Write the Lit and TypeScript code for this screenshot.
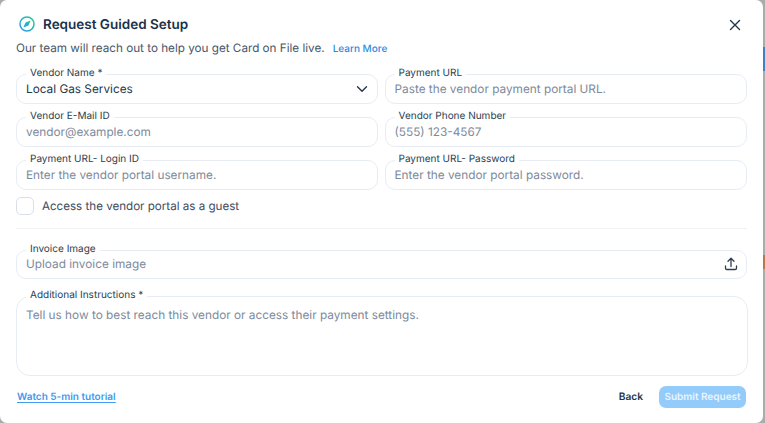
import { LitElement, html, css } from "lit";
import { customElement } from "lit/decorators.js";

@customElement("app-root")
export class AppRoot extends LitElement {
  static styles = css`
    :host {
      display: flex;
      width: 765px;
      height: 423px;
      overflow: hidden;
      background: #a9abad;
      font-family: Inter, "Liberation Sans", sans-serif;
      color: #1f3347;
      text-rendering: geometricPrecision;
    }
    .modal {
      box-sizing: border-box;
      width: 763px;
      height: 423px;
      flex: none;
      background: #fff;
      border-radius: 7px;
      padding: 14px 18px 0 16px;
      display: flex;
      flex-direction: column;
    }
    .strip {
      flex: 1;
      display: flex;
      flex-direction: column;
    }
    .s1 { height: 47px; }
    .s2 { height: 24px; background: #3d83c4; }
    .s3 { height: 184px; }
    .s4 { height: 14px; background: #b8794a; }
    .head {
      display: flex;
      align-items: center;
      height: 21px;
      padding-left: 2px;
    }
    .compass { width: 16px; height: 16px; flex: none; margin: -2px 0 0 1px; }
    .title {
      margin-left: 8px;
      font-size: 13.5px;
      font-weight: 600;
      color: #1c3146;
      flex: 1;
    }
    .close { width: 14px; height: 14px; flex: none; margin-right: 3px; }
    .sub {
      display: flex;
      align-items: baseline;
      margin-top: 6px;
      height: 17px;
      font-size: 11.7px;
      color: #465668;
    }
    .learn {
      margin-left: 8px;
      font-size: 10px;
      font-weight: 500;
      color: #2a8ce0;
    }
    .grid {
      margin-top: 16px;
      display: grid;
      grid-template-columns: 362px 362.5px;
      column-gap: 6.5px;
      row-gap: 13px;
    }
    .field {
      position: relative;
      box-sizing: border-box;
      height: 30px;
      border: 1px solid #e8ecf4;
      border-radius: 10px;
      display: flex;
      align-items: center;
      padding: 0 9px;
      font-size: 11.8px;
      color: #7d8a9b;
    }
    .legend {
      position: absolute;
      left: 9px;
      top: -8px;
      padding: 0 4px;
      background: #fff;
      font-size: 10px;
      line-height: 13px;
      color: #2c3e50;
      white-space: nowrap;
    }
    .value { flex: 1; }
    .filled { color: #23374b; }
    .chev { width: 14px; height: 14px; flex: none; margin-right: -1px; }
    .check {
      display: flex;
      align-items: center;
      margin-top: 7px;
      height: 18px;
      font-size: 11.6px;
      color: #3c4c5e;
    }
    .box {
      box-sizing: border-box;
      width: 18px;
      height: 18px;
      border: 1px solid #d9dfe9;
      border-radius: 5px;
      margin-right: 8px;
    }
    .rule {
      height: 1px;
      background: #f0f2f6;
      margin-top: 13px;
      width: 731px;
    }
    .wide { width: 731px; margin-top: 21px; height: 29px; padding-bottom: 1px; }
    .upload { width: 16px; height: 16px; flex: none; margin-right: -2px; }
    .area {
      width: 732px;
      height: 80px;
      margin-top: 17px;
      align-items: flex-start;
      padding-top: 11px;
      border-radius: 14px;
    }
    .foot {
      display: flex;
      align-items: center;
      margin-top: 9px;
      width: 730px;
      height: 24px;
    }
    .tut {
      flex: 1;
      margin-left: 1px;
      font-size: 10px;
      font-weight: 600;
      color: #3f9bf0;
      text-decoration: underline;
      text-underline-offset: 2px;
    }
    .back {
      font-size: 10.2px;
      font-weight: 600;
      color: #22364a;
      margin-right: 16px;
    }
    .submit {
      box-sizing: border-box;
      width: 87px;
      height: 22px;
      border-radius: 7px;
      background: #93cbfa;
      color: #e9f5fe;
      font-size: 10px;
      font-weight: 600;
      display: flex;
      align-items: center;
      justify-content: center;
    }
  `;

  private field(label: string, text: string, filled = false, chevron = false) {
    return html`<div class="field">
      <span class="legend">${label}</span>
      <span class="value ${filled ? "filled" : ""}">${text}</span>
      ${chevron
        ? html`<svg class="chev" viewBox="0 0 14 14" fill="none" stroke="#23374b" stroke-width="1.4" stroke-linecap="round" stroke-linejoin="round"><path d="M2.5 4.8 7 9.3 11.5 4.8"/></svg>`
        : ""}
    </div>`;
  }

  render() {
    return html`
      <div class="modal">
        <div class="head">
          <svg class="compass" viewBox="0 0 16 16" fill="none">
            <defs>
              <linearGradient id="g" x1="0" y1="1" x2="1" y2="0">
                <stop offset="0" stop-color="#2f9bf0" />
                <stop offset="1" stop-color="#22c98f" />
              </linearGradient>
            </defs>
            <circle cx="8" cy="8" r="7" stroke="url(#g)" stroke-width="1.5" />
            <path d="M11.6 4.4 9.5 9.5 4.4 11.6 6.5 6.5Z" fill="url(#g)" />
          </svg>
          <span class="title">Request Guided Setup</span>
          <svg class="close" viewBox="0 0 14 14" fill="none" stroke="#23374b" stroke-width="1.4" stroke-linecap="round"><path d="M2.5 2.5 11.5 11.5M11.5 2.5 2.5 11.5"/></svg>
        </div>
        <div class="sub">
          <span>Our team will reach out to help you get Card on File live.</span>
          <span class="learn">Learn More</span>
        </div>
        <div class="grid">
          ${this.field("Vendor Name *", "Local Gas Services", true, true)}
          ${this.field("Payment URL", "Paste the vendor payment portal URL.")}
          ${this.field("Vendor E-Mail ID", "vendor@example.com")}
          ${this.field("Vendor Phone Number", "(555) 123-4567")}
          ${this.field("Payment URL- Login ID", "Enter the vendor portal username.")}
          ${this.field("Payment URL- Password", "Enter the vendor portal password.")}
        </div>
        <div class="check"><span class="box"></span>Access the vendor portal as a guest</div>
        <div class="rule"></div>
        <div class="field wide">
          <span class="legend">Invoice Image</span>
          <span class="value">Upload invoice image</span>
          <svg class="upload" viewBox="0 0 16 16" fill="none" stroke="#2c3e50" stroke-width="1.3" stroke-linecap="round" stroke-linejoin="round"><path d="M8 10.5V2.5M5 5.2 8 2.2 11 5.2M2.5 10v2.2c0 .8.5 1.3 1.3 1.3h8.4c.8 0 1.3-.5 1.3-1.3V10"/></svg>
        </div>
        <div class="field area">
          <span class="legend">Additional Instructions *</span>
          <span class="value">Tell us how to best reach this vendor or access their payment settings.</span>
        </div>
        <div class="foot">
          <span class="tut">Watch 5-min tutorial</span>
          <span class="back">Back</span>
          <span class="submit">Submit Request</span>
        </div>
      </div>
      <div class="strip">
        <div class="s1"></div><div class="s2"></div><div class="s3"></div><div class="s4"></div>
      </div>
    `;
  }
}
